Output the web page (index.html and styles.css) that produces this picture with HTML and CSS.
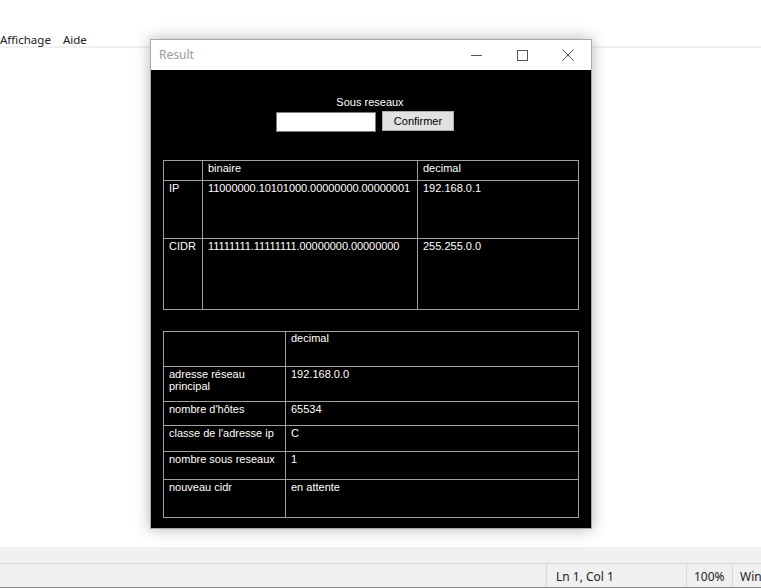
FILE: index.html
```html
<html>
<head>
    <title>Result</title>
    <link rel="stylesheet" href="styles.css">
</head>
<body>
    <div class="app">
        <div class="menubar">
            <span class="menu-item">Affichage</span>
            <span class="menu-item">Aide</span>
        </div>
        <div class="editor"></div>
        <div class="scroll-band"></div>
        <div class="statusbar">
            <span class="status-cell pos">Ln 1, Col 1</span>
            <span class="status-cell zoom">100%</span>
            <span class="status-cell eol">Windows (CRLF)</span>
        </div>
    </div>

    <div class="window">
        <div class="titlebar">
            <span class="title">Result</span>
            <div class="controls">
                <span class="ctrl">
                    <svg width="11" height="11" viewBox="0 0 11 11"><path d="M0 5.5h11" stroke="#555" stroke-width="1"/></svg>
                </span>
                <span class="ctrl">
                    <svg width="11" height="11" viewBox="0 0 11 11"><rect x="0.5" y="0.5" width="10" height="10" fill="none" stroke="#555" stroke-width="1"/></svg>
                </span>
                <span class="ctrl">
                    <svg width="12" height="12" viewBox="0 0 12 12"><path d="M0.5 0.5l11 11M11.5 0.5l-11 11" stroke="#555" stroke-width="1"/></svg>
                </span>
            </div>
        </div>

        <div class="client">
            <div class="subnet-form">
                <div class="subnet-label">Sous reseaux</div>
                <div class="subnet-row">
                    <input type="text" class="subnet-input">
                    <button class="confirm-btn">Confirmer</button>
                </div>
            </div>

            <table class="grid grid-bin">
                <tr class="r-head">
                    <td class="c-name"></td>
                    <td class="c-bin">binaire</td>
                    <td>decimal</td>
                </tr>
                <tr class="r-ip">
                    <td>IP</td>
                    <td class="bits">11000000.10101000.00000000.00000001</td>
                    <td>192.168.0.1</td>
                </tr>
                <tr class="r-cidr">
                    <td>CIDR</td>
                    <td class="bits">11111111.11111111.00000000.00000000</td>
                    <td>255.255.0.0</td>
                </tr>
            </table>

            <table class="grid grid-info">
                <tr class="h35">
                    <td class="c-label"></td>
                    <td class="head-cell">decimal</td>
                </tr>
                <tr class="h35">
                    <td>adresse réseau principal</td>
                    <td>192.168.0.0</td>
                </tr>
                <tr class="h24">
                    <td>nombre d'hôtes</td>
                    <td>65534</td>
                </tr>
                <tr class="h26">
                    <td>classe de l'adresse ip</td>
                    <td>C</td>
                </tr>
                <tr class="h28">
                    <td>nombre sous reseaux</td>
                    <td>1</td>
                </tr>
                <tr class="h38">
                    <td>nouveau cidr</td>
                    <td>en attente</td>
                </tr>
            </table>
        </div>
    </div>
</body>
</html>
```

FILE: styles.css
```css
html, body {
    margin: 0;
    padding: 0;
    width: 761px;
    height: 588px;
    overflow: hidden;
    background: #fff;
    font-family: 'Noto Sans', 'Open Sans', sans-serif;
}
.app {
    display: flex;
    flex-direction: column;
    height: 588px;
}
.menubar {
    height: 46px;
    display: flex;
    align-items: flex-end;
    gap: 12px;
    border-bottom: 2px solid #f0f0f0;
    font-size: 11.5px;
    color: #222;
}
.menu-item { line-height: 16px; margin-bottom: -2px; }
.editor { flex: 1; background: #fff; }
.scroll-band {
    height: 16px;
    background: #f0f0f0;
    border-bottom: 1px solid #d8d8d8;
}
.statusbar {
    height: 23px;
    background: #f0f0f0;
    display: flex;
    font-size: 12px;
    color: #222;
    padding-left: 546px;
    border-bottom: 1px solid #888;
    overflow: hidden;
}
.status-cell {
    flex-shrink: 0;
    border-left: 1px solid #d8d8d8;
    padding: 4px 0 0 9px;
    white-space: nowrap;
}
.pos { width: 130px; }
.zoom { width: 38px; padding-left: 7px; }
.eol { padding-left: 7px; }

/* result window */
.window {
    position: absolute;
    left: 150px;
    top: 39px;
    width: 440px;
    height: 488px;
    border: 1px solid #a8a8a8;
    background: #000;
    box-shadow: 0 0 14px rgba(0,0,0,0.3);
}
.titlebar {
    height: 30px;
    background: #fff;
    display: flex;
    align-items: center;
    justify-content: space-between;
}
.title {
    padding-left: 8px;
    margin-top: -2px;
    font-size: 12px;
    color: #999;
}
.controls { display: flex; }
.ctrl {
    width: 46px;
    height: 30px;
    display: flex;
    align-items: center;
    justify-content: center;
}

.client {
    padding: 26px 12px 0 12px;
    font-family: 'Liberation Sans', Arial, sans-serif;
    font-size: 11px;
    color: #fff;
}
.subnet-label {
    text-align: center;
    line-height: 13px;
    margin-left: -2px;
}
.subnet-row {
    display: flex;
    align-items: flex-start;
    gap: 6px;
    padding-left: 113px;
    margin-top: 2px;
}
.subnet-input {
    width: 100px;
    height: 20px;
    margin: 1px 0 0 0;
    box-sizing: border-box;
    border: 1px solid #7a7a7a;
    background: #fff;
}
.confirm-btn {
    width: 72px;
    height: 20px;
    box-sizing: border-box;
    border: 1px solid #adadad;
    background: #e1e1e1;
    font-family: 'Liberation Sans', Arial, sans-serif;
    font-size: 11px;
    color: #000;
    padding: 0;
}

.grid {
    border-collapse: collapse;
    width: 416px;
    table-layout: fixed;
    font-family: 'Liberation Sans', Arial, sans-serif;
    font-size: 11px;
    color: #fff;
}
.grid td {
    border: 1px solid #a0a0a0;
    vertical-align: top;
    padding: 1px 5px 0 5px;
    line-height: 13px;
    font-size: 11px;
    color: #fff;
}
.grid-bin { margin-top: 28px; }
.grid-bin td { white-space: nowrap; }
.grid-bin .bits { letter-spacing: -0.06px; }
.c-name { width: 28px; }
.c-bin { width: 204px; }
.r-head { height: 20px; }
.r-ip { height: 58px; }
.r-cidr { height: 71px; }

.grid-info { margin-top: 21px; }
.c-label { width: 111px; }
.grid-info td { padding-top: 1px; line-height: 12px; }
.grid-info .head-cell { padding-top: 0; }
.h35 { height: 35px; }
.h24 { height: 24px; }
.h26 { height: 26px; }
.h28 { height: 28px; }
.h38 { height: 38px; }
```
